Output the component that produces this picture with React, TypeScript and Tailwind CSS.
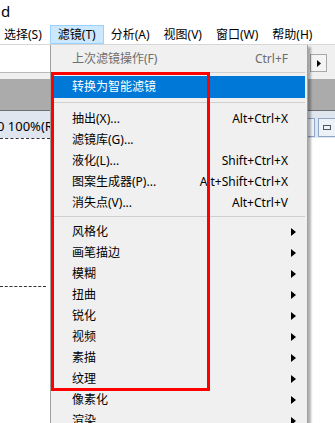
import { Fragment } from 'react';

const FONT = { fontFamily: '"Noto Sans", "Noto Sans CJK SC", sans-serif' };

const menuBar = ['选择(S)', '滤镜(T)', '分析(A)', '视图(V)', '窗口(W)', '帮助(H)'];

const actions = [
  { label: '抽出(X)...', key: 'Alt+Ctrl+X' },
  { label: '滤镜库(G)...', key: '' },
  { label: '液化(L)...', key: 'Shift+Ctrl+X' },
  { label: '图案生成器(P)...', key: 'Alt+Shift+Ctrl+X' },
  { label: '消失点(V)...', key: 'Alt+Ctrl+V' },
];

const groups = ['风格化', '画笔描边', '模糊', '扭曲', '锐化', '视频', '素描', '纹理', '像素化', '渲染'];

const Separator = ({ className }: { className: string }) => (
  <div className={`mx-[2px] h-px bg-[#cfcfcf] ${className}`} />
);

const Arrow = () => (
  <svg width="5" height="8" viewBox="0 0 5 8" className="mr-[8px]">
    <path d="M0 0 L5 4 L0 8 Z" fill="#000" />
  </svg>
);

export default function App() {
  return (
    <div className="relative w-[335px] h-[423px] overflow-hidden bg-white text-[12px] text-black" style={FONT}>
      {/* window title */}
      <div className="h-[25px] pl-px pt-px text-[15px] leading-[20px]">d</div>

      {/* menu bar */}
      <div className="flex h-[20px] items-center whitespace-nowrap border-b border-[#d7d7d7] bg-white">
        {menuBar.map((m, i) => (
          <div
            key={m}
            className={`flex h-[19px] shrink-0 items-center px-[7px] ${i === 0 ? '-ml-[3px] mr-px' : ''} ${
              i === 1 ? 'border border-[#99d1ff] bg-[#cce8ff] px-[6px]' : ''
            }`}
          >
            {m}
          </div>
        ))}
      </div>

      {/* toolbar */}
      <div className="flex h-[34px] items-start justify-end bg-[#f0f0f0] pr-[8px]">
        <div className="h-[28px] flex-1 border-b border-[#b9b9b9] bg-white" />
        <div className="ml-[2px] mt-[9px] flex h-[18px] w-[17px] items-center justify-center border border-[#a8a8a8] bg-[#f4f4f4]">
          <svg width="4" height="7" viewBox="0 0 4 7">
            <path d="M0 0 L4 3.5 L0 7 Z" fill="#000" />
          </svg>
        </div>
      </div>

      {/* gray band */}
      <div className="h-[32px] border-b border-[#6f6f6f] bg-[#ababab]" />

      {/* document tab */}
      <div className="flex h-[27px] items-end justify-between bg-[#dfe6f0] pb-px">
        <span className="-ml-[3px] mb-[1px] whitespace-nowrap text-[13px]">0 100%(RGB/8)</span>
        <div className="flex gap-[3px]">
          <div className="h-[19px] w-[15px] border border-[#8fa6c4] bg-[#edf2f8]" />
          <div className="flex h-[19px] w-[17px] items-center justify-center border border-r-0 border-[#8fa6c4] bg-[#edf2f8]">
            <div className="h-[5px] w-[8px] border border-[#555]" />
          </div>
        </div>
      </div>
      <div className="h-px w-[50px] border-t border-dashed border-[#333]" />
      <div className="mt-[147px] h-px w-[46px] border-t border-dashed border-[#333]" />

      {/* dropdown menu */}
      <div className="absolute left-[50px] top-[45px] w-[258px] whitespace-nowrap border-x border-[#a0a0a0] bg-[#f0f0f0] pt-[3px] shadow-[3px_2px_2px_rgba(0,0,0,0.3)]">
        <div className="flex h-[21px] items-center justify-between pl-[21px] pr-[19px] text-[#6d6d6d]">
          <span>上次滤镜操作(F)</span>
          <span>Ctrl+F</span>
        </div>
        <Separator className="mb-[3px] mt-[3px]" />
        <div className="mx-[2px] mr-[2px] flex h-[22px] items-center bg-[#0078d7] pl-[19px] text-white">转换为智能滤镜</div>
        <Separator className="mb-[5px] mt-[4px]" />
        {actions.map((a) => (
          <div key={a.label} className="flex h-[21px] items-center justify-between pl-[21px] pr-[19px]">
            <span>{a.label}</span>
            <span>{a.key}</span>
          </div>
        ))}
        <Separator className="mb-[4px] mt-[3px]" />
        {groups.map((g) => (
          <Fragment key={g}>
            <div className="flex h-[21px] items-center justify-between pl-[21px] pr-[3px]">
              <span>{g}</span>
              <Arrow />
            </div>
          </Fragment>
        ))}
      </div>

      {/* annotation frame */}
      <div className="absolute left-[51px] top-[72px] h-[319px] w-[159px] border-[3px] border-[#ff0000]" />
    </div>
  );
}
